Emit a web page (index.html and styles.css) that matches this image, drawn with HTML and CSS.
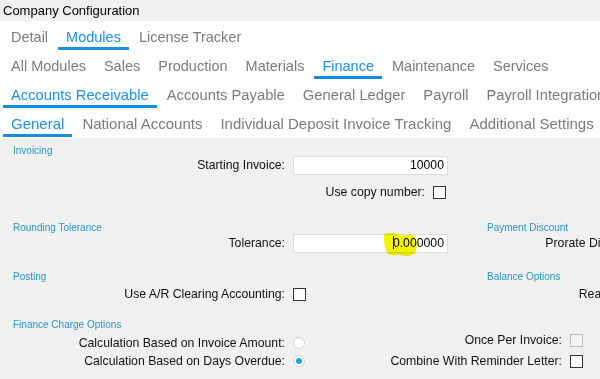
FILE: index.html
```html
<!DOCTYPE html>
<html lang="en">
<head>
    <meta charset="UTF-8">
    <meta name="viewport" content="width=device-width, initial-scale=1.0">
    <title>Company Configuration</title>
    <link rel="stylesheet" href="styles.css">
</head>
<body>
    <div class="window">
        <div class="titlebar">Company Configuration</div>

        <div class="tabstrip">
            <div class="tabrow">
                <span class="tab">Detail</span>
                <span class="tab active">Modules</span>
                <span class="tab">License Tracker</span>
            </div>
            <div class="tabrow">
                <span class="tab">All Modules</span>
                <span class="tab">Sales</span>
                <span class="tab">Production</span>
                <span class="tab">Materials</span>
                <span class="tab active">Finance</span>
                <span class="tab">Maintenance</span>
                <span class="tab">Services</span>
            </div>
            <div class="tabrow tabrow-module">
                <span class="tab active">Accounts Receivable</span>
                <span class="tab">Accounts Payable</span>
                <span class="tab">General Ledger</span>
                <span class="tab">Payroll</span>
                <span class="tab">Payroll Integration</span>
            </div>
            <div class="tabrow tabrow-page">
                <span class="tab active">General</span>
                <span class="tab">National Accounts</span>
                <span class="tab">Individual Deposit Invoice Tracking</span>
                <span class="tab">Additional Settings</span>
            </div>
        </div>

        <div class="content">
            <section class="group group-invoicing">
                <h3 class="group-title">Invoicing</h3>
                <div class="field">
                    <label class="field-label">Starting Invoice:</label>
                    <div class="text-box">10000</div>
                </div>
                <div class="field field-copy">
                    <label class="field-label label-wide">Use copy number:</label>
                    <span class="check"></span>
                </div>
            </section>

            <div class="band band-rounding">
                <section class="group col-left">
                    <h3 class="group-title">Rounding Tolerance</h3>
                    <div class="field field-tight">
                        <label class="field-label">Tolerance:</label>
                        <div class="text-box marked">
                            <span class="caret"></span>0.000000
                            <!-- highlighter scribble on the screenshot -->
                            <svg class="highlight" width="36" height="25" viewBox="0 0 36 25">
                                <path d="M1 3 C5 0 12 1 16 3 C22 4 28 1 31 4 C34 8 34 15 33 19 C31 24 24 25 18 23 C13 22 8 25 4 21 C2 16 0 8 1 3 Z" fill="#f4f400"/>
                            </svg>
                        </div>
                    </div>
                </section>
                <section class="group col-right">
                    <h3 class="group-title">Payment Discount</h3>
                    <div class="field field-tight">
                        <label class="field-label label-right">Prorate Discount:</label>
                        <span class="check"></span>
                    </div>
                </section>
            </div>

            <div class="band band-posting">
                <section class="group col-left">
                    <h3 class="group-title">Posting</h3>
                    <div class="field field-gap">
                        <label class="field-label">Use A/R Clearing Accounting:</label>
                        <span class="check"></span>
                    </div>
                </section>
                <section class="group col-right">
                    <h3 class="group-title">Balance Options</h3>
                    <div class="field field-gap">
                        <label class="field-label label-right">Reactivate:</label>
                        <span class="check"></span>
                    </div>
                </section>
            </div>

            <section class="group group-finance">
                <h3 class="group-title">Finance Charge Options</h3>
                <div class="band">
                    <div class="fco-left">
                        <div class="field field-small">
                            <label class="field-label">Calculation Based on Invoice Amount:</label>
                            <span class="radio"></span>
                        </div>
                        <div class="field field-small">
                            <label class="field-label">Calculation Based on Days Overdue:</label>
                            <span class="radio on"></span>
                        </div>
                    </div>
                    <div class="fco-right">
                        <div class="field">
                            <label class="field-label label-fco">Once Per Invoice:</label>
                            <span class="check disabled"></span>
                        </div>
                        <div class="field">
                            <label class="field-label label-fco">Combine With Reminder Letter:</label>
                            <span class="check"></span>
                        </div>
                    </div>
                </div>
            </section>
        </div>
    </div>
</body>
</html>
```

FILE: styles.css
```css
* {
    box-sizing: border-box;
}

body {
    margin: 0;
    font-family: "Liberation Sans", Arial, sans-serif;
    background-color: #f0f0f0;
    color: #111;
}

.window {
    width: 600px;
    height: 379px;
    overflow: hidden;
}

.titlebar {
    height: 21px;
    padding: 1px 0 0 3px;
    font-size: 13px;
    line-height: 20px;
    color: #000;
    background-color: #f0f0f0;
}

/* tab rows */
.tabstrip {
    background-color: #ffffff;
    padding-bottom: 1px;
}

.tabrow {
    display: flex;
    gap: 2px;
    padding-left: 3px;
    font-size: 14.5px;
    white-space: nowrap;
}

.tabrow-module {
    font-size: 14.75px;
}

.tabrow-page {
    font-size: 15px;
}

.tab {
    height: 29px;
    padding: 7px 8px 1px;
    line-height: 18px;
    color: #7b7b7b;
    border-bottom: 3px solid transparent;
}

.tab.active {
    color: #1e90e8;
    border-bottom-color: #1a8ce2;
}

/* settings area */
.content {
    padding: 8px 0 0 13px;
}

.group-title {
    margin: 0;
    height: 9px;
    font-size: 10px;
    font-weight: normal;
    line-height: 9px;
    color: #2596be;
    white-space: nowrap;
}

.band {
    display: flex;
}

.col-left {
    width: 474px;
    flex-shrink: 0;
}

.col-right {
    white-space: nowrap;
}

.band-rounding {
    margin-top: 21px;
}

.band-posting {
    margin-top: 19px;
}

.group-finance {
    margin-top: 16px;
}

.field {
    display: flex;
    align-items: center;
    gap: 8px;
    height: 20px;
    font-size: 12.25px;
    white-space: nowrap;
}

.field-copy {
    margin-top: 7px;
}

.field-tight {
    margin-top: 1px;
}

.field-gap {
    margin-top: 3px;
}

.field-small {
    height: 18px;
}

.field-label {
    width: 272px;
    flex-shrink: 0;
    text-align: right;
}

.label-wide {
    width: 412px;
}

.label-right {
    width: 153px;
}

.label-fco {
    width: 256px;
}

.fco-left {
    width: 293px;
    flex-shrink: 0;
    margin-top: 5px;
}

.fco-right {
    display: flex;
    flex-direction: column;
    gap: 1px;
    margin-top: 1px;
}

/* controls */
.text-box {
    position: relative;
    width: 155px;
    height: 19px;
    padding-right: 3px;
    line-height: 17px;
    text-align: right;
    color: #000;
    background-color: #fff;
    border: 1px solid #dcdcdc;
}

.caret {
    display: inline-block;
    width: 1px;
    height: 13px;
    margin-right: -1px;
    vertical-align: -2px;
    background-color: #000;
}

.highlight {
    position: absolute;
    left: 89px;
    top: -3px;
    mix-blend-mode: multiply;
}

.check {
    width: 13px;
    height: 13px;
    flex-shrink: 0;
    background-color: #fff;
    border: 1px solid #333;
}

.check.disabled {
    background-color: #f3f3f3;
    border-color: #bcbcbc;
}

.radio {
    position: relative;
    width: 12px;
    height: 12px;
    flex-shrink: 0;
    border-radius: 50%;
    background-color: #fff;
    border: 1px solid #d2d2d2;
}

.radio.on::after {
    content: "";
    position: absolute;
    left: 2px;
    top: 2px;
    width: 6px;
    height: 6px;
    border-radius: 50%;
    background-color: #1aa5f0;
}
```
